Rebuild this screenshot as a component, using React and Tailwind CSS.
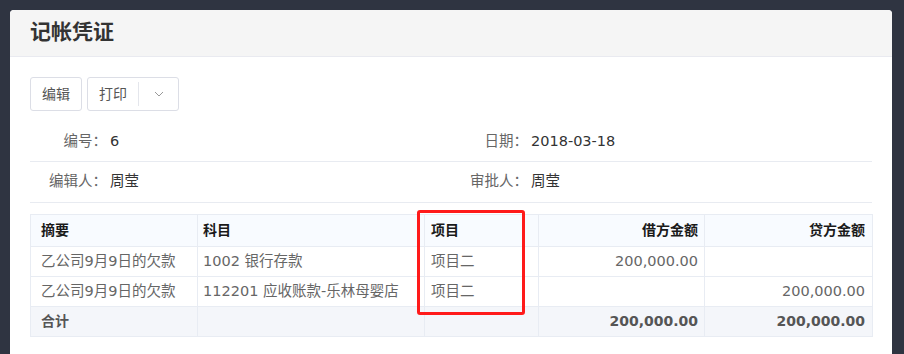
import React from 'react';

const rows = [
  { summary: '乙公司9月9日的欠款', subject: '1002 银行存款', item: '项目二', debit: '200,000.00', credit: '' },
  { summary: '乙公司9月9日的欠款', subject: '112201 应收账款-乐林母婴店', item: '项目二', debit: '', credit: '200,000.00' },
];

function InfoCell({ label, value }) {
  return (
    <div className="flex flex-1 items-center text-[14.5px]">
      <span className="w-[77px] text-right text-[#666]">{label}</span>
      <span className="ml-[3px] text-[#333]">{value}</span>
    </div>
  );
}

export default function App() {
  return (
    <div
      className="w-[904px] h-[354px] overflow-hidden bg-[#2f3441] pt-[10px] pl-[10px] text-[14px]"
      style={{ fontFamily: '"DejaVu Sans", "Noto Sans CJK SC", sans-serif' }}
    >
      <div className="relative w-[882px] h-[344px] rounded-t-[4px] bg-white">
        <div className="flex h-[47px] items-center border-b border-[#e9eaf0] rounded-t-[4px] bg-[#f5f5f5] px-[20px] text-[21px] font-bold text-[#333]">
          记帐凭证
        </div>

        <div className="px-[20px] pt-[20px]">
          <div className="flex gap-[5px]">
            <button className="h-[34px] rounded-[3px] border border-[#dcdee6] px-[11px] text-[#555]">编辑</button>
            <div className="flex h-[34px] rounded-[3px] border border-[#dcdee6]">
              <button className="px-[11px] text-[#555]">打印</button>
              <div className="my-[4px] w-px bg-[#e4e6ec]" />
              <button className="flex w-[39px] items-center justify-center text-[#999]">
                <svg width="10" height="6" viewBox="0 0 10 6" fill="none" stroke="currentColor" strokeWidth="1">
                  <path d="M1 1l4 4 4-4" />
                </svg>
              </button>
            </div>
          </div>

          <div className="mt-[11px]">
            <div className="flex h-[40px] items-center border-b border-[#e8ebf1]">
              <InfoCell label="编号：" value="6" />
              <InfoCell label="日期：" value="2018-03-18" />
            </div>
            <div className="flex h-[41px] items-center border-b border-[#e8ebf1]">
              <InfoCell label="编辑人：" value="周莹" />
              <InfoCell label="审批人：" value="周莹" />
            </div>
          </div>

          <table className="mt-[11px] w-[842px] table-fixed border-collapse">
            <colgroup>
              <col className="w-[167px]" />
              <col className="w-[227px]" />
              <col className="w-[114px]" />
              <col className="w-[166px]" />
              <col className="w-[168px]" />
            </colgroup>
            <thead>
              <tr className="h-[32px] bg-[#f8fbff] font-bold text-[#1a1a1a]">
                <th className="border border-[#e8ecf3] pl-[10px] text-left">摘要</th>
                <th className="border border-[#e8ecf3] pl-[5px] text-left">科目</th>
                <th className="border border-[#e8ecf3] pl-[6px] text-left">项目</th>
                <th className="border border-[#e8ecf3] pr-[6px] text-right">借方金额</th>
                <th className="border border-[#e8ecf3] pr-[7px] text-right">贷方金额</th>
              </tr>
            </thead>
            <tbody className="text-[14.5px] text-[#666]">
              {rows.map((r, i) => (
                <tr key={i} className="h-[30px]">
                  <td className="border border-[#e8ecf3] pl-[10px] whitespace-nowrap">{r.summary}</td>
                  <td className="border border-[#e8ecf3] pl-[5px] whitespace-nowrap">{r.subject}</td>
                  <td className="border border-[#e8ecf3] pl-[6px]">{r.item}</td>
                  <td className="border border-[#e8ecf3] pr-[6px] text-right">{r.debit}</td>
                  <td className="border border-[#e8ecf3] pr-[7px] text-right">{r.credit}</td>
                </tr>
              ))}
              <tr className="h-[30px] bg-[#f4f6fa] text-[14px] font-bold text-[#555]">
                <td className="border border-[#e8ecf3] pl-[10px]">合计</td>
                <td className="border border-[#e8ecf3]" />
                <td className="border border-[#e8ecf3]" />
                <td className="border border-[#e8ecf3] pr-[6px] text-right">200,000.00</td>
                <td className="border border-[#e8ecf3] pr-[7px] text-right">200,000.00</td>
              </tr>
            </tbody>
          </table>
        </div>

        <div className="pointer-events-none absolute left-[407px] top-[200px] h-[105px] w-[108px] rounded-[3px] border-[3px] border-[#ff1a1a]" />
      </div>
    </div>
  );
}
